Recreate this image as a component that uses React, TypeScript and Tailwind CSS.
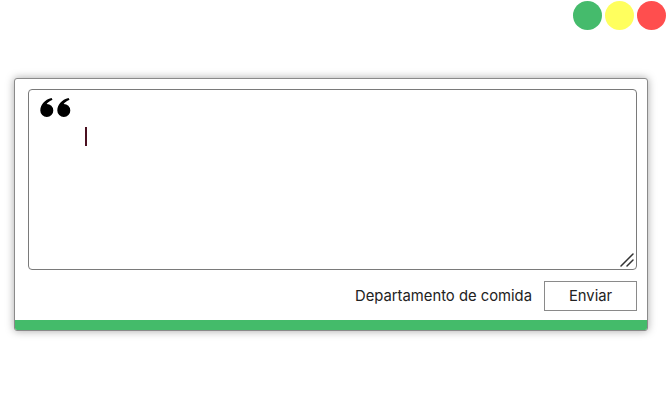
import { useState } from "react";

const TrafficLights = () => (
  <div className="flex justify-end gap-[3px] pt-px pr-0">
    <span className="w-[29px] h-[29px] rounded-full bg-[#45bb6c]" />
    <span className="w-[29px] h-[29px] rounded-full bg-[#ffff5e]" />
    <span className="w-[29px] h-[29px] rounded-full bg-[#ff4e4e]" />
  </div>
);

const QuoteMark = () => (
  <svg width="31" height="20" viewBox="0 0 31 20" className="block">
    <path
      d="M0.3 12.5 C0.5 6.5 4.5 1.8 11.6 0 L12.5 1.8 C8.8 3.6 7 5.2 6.7 6 A6.5 6.5 0 1 1 0.3 12.5 Z"
      fill="#000"
    />
    <path
      d="M17.3 12.5 C17.5 6.5 21.5 1.8 28.6 0 L29.5 1.8 C25.8 3.6 24 5.2 23.7 6 A6.5 6.5 0 1 1 17.3 12.5 Z"
      fill="#000"
    />
  </svg>
);

const App = () => {
  const [department] = useState("Departamento de comida");

  return (
    <div className="w-[666px] h-[404px] bg-white font-['Inter',sans-serif] text-[#222]">
      <TrafficLights />
      <div className="ml-[14px] mt-[48px] w-[634px] h-[253px] border border-[#8a8a8a] rounded-[3px] bg-white shadow-[0_0_8px_rgba(0,0,0,0.35)] flex flex-col overflow-hidden">
        <div className="pl-[13px] pr-[10px] pt-[10px]">
          <div className="relative h-[181px] border border-[#7a7a7a] rounded-[4px] bg-white pl-[11px] pt-[8px]">
            <QuoteMark />
            <div className="ml-[45px] mt-[9px] w-[2px] h-[19px] bg-[#4a1020]" />
            <svg
              className="absolute right-[2px] bottom-[2px]"
              width="14"
              height="14"
              viewBox="0 0 14 14"
            >
              <path d="M1 13 L13 1 M7 13 L13 7" stroke="#333" strokeWidth="1.5" strokeLinecap="round" />
            </svg>
          </div>
        </div>
        <div className="flex items-center justify-end gap-[12px] pr-[10px] mt-[11px]">
          <span className="text-[14.8px] text-[#222]">{department}</span>
          <button className="w-[93px] h-[30px] border border-[#8a8a8a] bg-white text-[14.8px] text-[#222]">
            Enviar
          </button>
        </div>
        <div className="mt-auto h-[10px] bg-[#44bb6a]" />
      </div>
    </div>
  );
};

export default App;
